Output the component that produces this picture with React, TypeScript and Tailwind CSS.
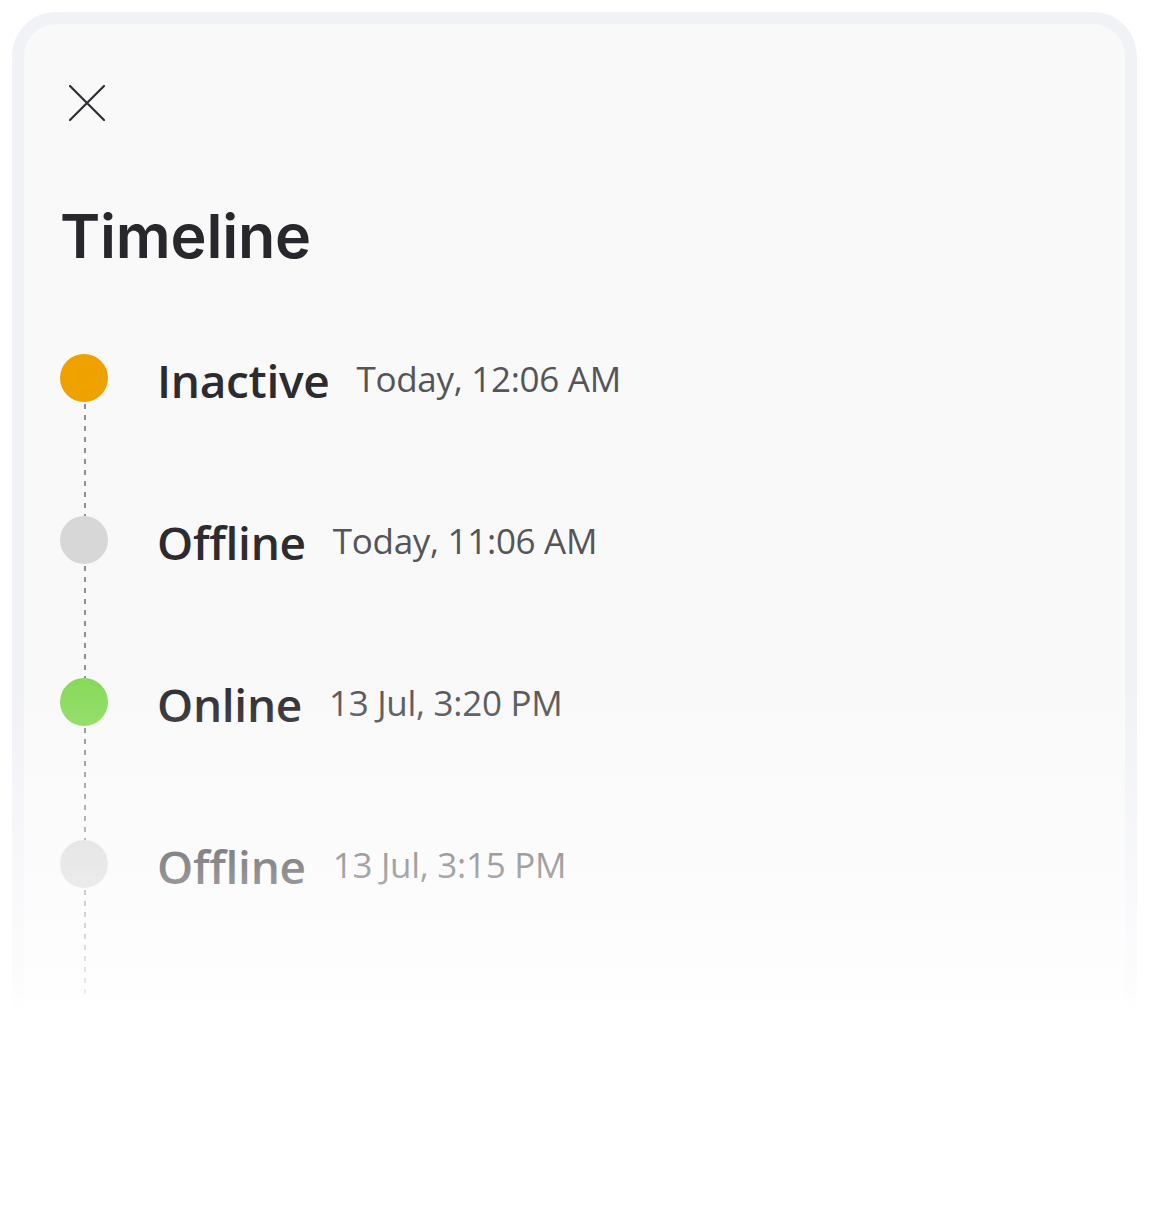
const events = [
  { label: "Inactive", time: "Today, 12:06 AM", dot: "bg-[#efa100]" },
  { label: "Offline", time: "Today, 11:06 AM", dot: "bg-[#d7d7d7]" },
  { label: "Online", time: "13 Jul, 3:20 PM", dot: "bg-[#88da5a]" },
  { label: "Offline", time: "13 Jul, 3:15 PM", dot: "bg-[#d7d7d7]" },
];

function CloseIcon() {
  return (
    <svg width="36" height="36" viewBox="0 0 36 36" fill="none" className="text-[#2f2f33]">
      <path d="M1 1 L35 35 M35 1 L1 35" stroke="currentColor" strokeWidth="2.2" strokeLinecap="round" />
    </svg>
  );
}

function DashedLine() {
  return (
    <svg width="4" className="h-full flex-1" preserveAspectRatio="none">
      <line x1="2" y1="2" x2="2" y2="2000" stroke="#8f8f94" strokeWidth="2" strokeDasharray="5 6" />
    </svg>
  );
}

export default function App() {
  return (
    <div className="relative min-h-[1227px] bg-white p-3 font-['Open_Sans',sans-serif]">
      <div className="h-[1135px] rounded-[44px] bg-[#f1f2f6] p-3">
        <div className="h-full rounded-[32px] bg-[#f9f9f9] pl-9 pt-[61px]">
          <div className="pl-[9px]">
            <CloseIcon />
          </div>
          <h1 className="mt-[85px] font-['Inter',sans-serif] text-[61px] leading-[60px] font-semibold tracking-[-0.2px] text-[#27272c]">
            Timeline
          </h1>
          <ol className="mt-[88px]">
            {events.map((e, i) => (
              <li key={i} className="flex h-[162px] gap-[49px]">
                <div className="flex w-12 flex-col items-center">
                  <div className={`h-12 w-12 shrink-0 rounded-full ${e.dot}`} />
                  <div className="flex flex-1 overflow-hidden pl-[2px]">
                    <DashedLine />
                  </div>
                </div>
                <div className="mt-[2px] flex h-12 items-center gap-[27px]">
                  <span className="text-[46px] font-semibold tracking-[-0.3px] text-[#2b2b30]">{e.label}</span>
                  <span className="-mt-[2px] text-[35px] tracking-[-0.3px] text-[#555559]">{e.time}</span>
                </div>
              </li>
            ))}
          </ol>
        </div>
      </div>
      <div className="pointer-events-none absolute inset-0 bg-[linear-gradient(to_bottom,rgba(255,255,255,0)_680px,rgba(255,255,255,0.45)_864px,rgba(255,255,255,0.85)_996px,rgba(255,255,255,0.96)_998px,rgba(255,255,255,0.98)_1147px,#ffffff_1148px)]" />
    </div>
  );
}
